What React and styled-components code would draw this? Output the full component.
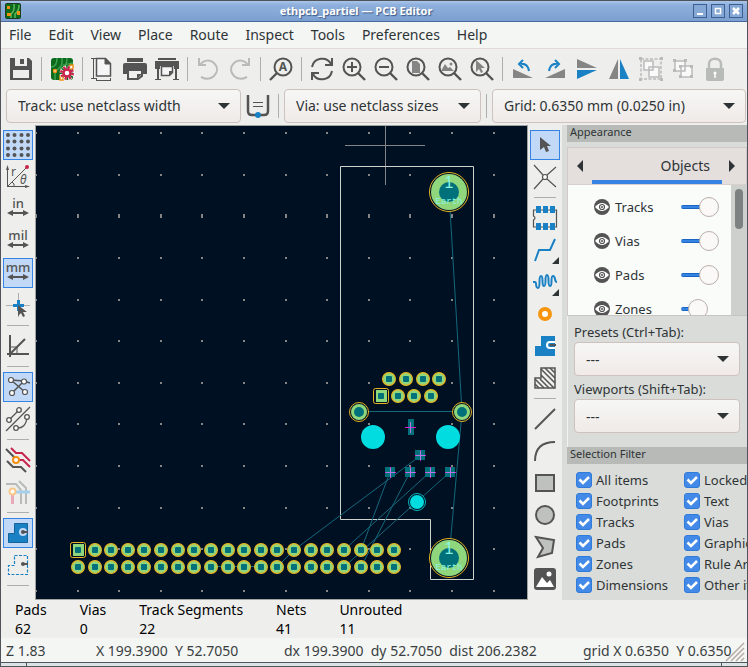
import React, { useState } from "react";
import styled, { createGlobalStyle } from "styled-components";

const GlobalStyle = createGlobalStyle`
  * {
    box-sizing: border-box;
  }
  body {
    margin: 0;
    font-family: "Noto Sans", "Open Sans", sans-serif;
    font-size: 14px;
    color: #2e3436;
  }
  button, select, input {
    font: inherit;
    color: inherit;
    margin: 0;
  }
`;

const Window = styled.div`
  display: flex;
  flex-direction: column;
  height: 100vh;
  overflow: hidden;
  background: #eeefed;
  border: 1px solid #50535a;
  border-bottom: none;
`;

const TitleBar = styled.header`
  display: grid;
  grid-template-columns: 20px 1fr 56px;
  align-items: center;
  flex: none;
  height: 21px;
  padding: 0 4px;
  background: linear-gradient(#a9c6ea, #8fb0dc 20%, #7a9fd0);
  border-bottom: 1px solid #4a6a9c;
`;

const Title = styled.h1`
  margin: 0;
  text-align: center;
  font-size: 11px;
  line-height: 20px;
  font-weight: 700;
  color: #ffffff;
  text-shadow: 1px 1px 1px #3c5a88;
`;

const WindowButtons = styled.div`
  display: flex;
  justify-content: flex-end;
  gap: 4px;
`;

const WindowButton = styled.button`
  display: flex;
  width: 14px;
  height: 14px;
  padding: 0;
  border: 1px solid #3c5f93;
  background: #86a8d6;
`;

const MenuBar = styled.nav`
  display: flex;
  flex: none;
  gap: 1px;
  height: 27px;
  background: #f4f6f4;
  border-bottom: 1px solid #e2dad8;
`;

const MenuItem = styled.button`
  padding: 0 8px;
  border: none;
  background: none;
  line-height: 26px;
`;

const Toolbar = styled.div`
  display: flex;
  align-items: center;
  flex: none;
  gap: 2px;
  height: 39px;
  padding: 0 5px;
`;

const OptionsBar = styled.div`
  display: flex;
  align-items: center;
  flex: none;
  height: 37px;
  padding: 0 1px 2px 5px;
  gap: 2px;
`;

const ToolButton = styled.button`
  position: relative;
  display: flex;
  align-items: center;
  justify-content: center;
  flex: none;
  width: 30px;
  height: 30px;
  padding: 0;
  border: 1px solid ${(p) => (p.$active ? "#3584e4" : "transparent")};
  background: ${(p) => (p.$active ? "#c1d9f7" : "transparent")};
`;

const Separator = styled.span`
  flex: none;
  width: ${(p) => (p.$across ? "22px" : "1px")};
  height: ${(p) => (p.$across ? "1px" : "24px")};
  margin: ${(p) => (p.$across ? "3px 0" : "0 3px")};
  background: #adafad;
`;

const Corner = styled.span`
  position: absolute;
  right: 0;
  bottom: 0;
  border-left: 7px solid transparent;
  border-bottom: 7px solid #2e3436;
`;

const SelectBox = styled.span`
  position: relative;
  display: flex;
  flex: ${(p) => p.$grow || "none"};
  min-width: 0;
`;

const SelectField = styled.select`
  appearance: none;
  width: 100%;
  height: 34px;
  padding: 0 32px 0 11px;
  border: 1px solid #cdc2bd;
  border-radius: 4px;
  background: linear-gradient(#f6f7f5, #f0eae8);
`;

const SelectArrow = styled.span`
  position: absolute;
  right: 11px;
  top: 14px;
  border: 6px solid transparent;
  border-top-color: #2e3436;
  border-bottom: none;
  pointer-events: none;
`;

const Workspace = styled.main`
  display: flex;
  flex: 1;
  min-height: 0;
`;

const SideBar = styled.div`
  display: flex;
  flex-direction: column;
  align-items: center;
  flex: none;
  gap: 2px;
  width: 34px;
  padding-top: 5px;
  overflow: hidden;
`;

const Board = styled.div`
  flex: 1;
  min-width: 0;
  overflow: hidden;
  border: 1px solid #a2a4a1;
  background: #001023;

  svg {
    display: block;
    width: 100%;
    height: 100%;
  }
`;

const Panels = styled.aside`
  display: flex;
  flex-direction: column;
  flex: none;
  width: 185px;
  padding-left: 5px;
  overflow: hidden;
  background: #dadcda;
`;

const PanelTitle = styled.h2`
  flex: none;
  margin: 0;
  padding-left: 3px;
  height: 17px;
  font-size: 11px;
  line-height: 14px;
  font-weight: 400;
  background: #b8bab7;
`;

const TabHeader = styled.div`
  display: flex;
  align-items: stretch;
  flex: none;
  height: 38px;
  margin-top: 5px;
  padding: 0 2px;
  background: #e4dedc;
  border: 1px solid #d0cbc8;
  border-bottom-color: #d8d0cc;
`;

const TabArrow = styled.button`
  width: 22px;
  padding: 0 0 0 7px;
  border: none;
  background: none;
`;

const ArrowShape = styled.span`
  display: block;
  width: 6px;
  height: 12px;
  background: #2e3436;
  clip-path: ${(p) =>
    p.$left ? "polygon(100% 0, 100% 100%, 0 50%)" : "polygon(0 0, 100% 50%, 0 100%)"};
`;

const Tab = styled.button`
  flex: 1;
  padding: 2px 12px 0 0;
  text-align: right;
  border: none;
  border-bottom: 4px solid #3584e4;
  background: none;
`;

const ObjectArea = styled.div`
  display: flex;
  flex: none;
  height: 131px;
  border-left: 1px solid #d0cbc8;
  border-bottom: 1px solid #c8c4c1;
  overflow: hidden;
`;

const ObjectList = styled.ul`
  flex: 1;
  height: 130px;
  margin: 0;
  padding: 5px 12px 0 26px;
  overflow: hidden;
  list-style: none;
  background: #fafcfa;
`;

const ObjectRow = styled.li`
  display: flex;
  align-items: center;
  height: 34px;
  font-size: 13px;
`;

const EyeButton = styled.button`
  display: flex;
  padding: 0;
  border: none;
  background: none;
`;

const ObjectLabel = styled.label`
  flex: 1;
  padding-left: 5px;
`;

const Opacity = styled.input`
  appearance: none;
  width: 38px;
  height: 20px;
  background: transparent;

  &::-webkit-slider-runnable-track {
    height: 4px;
    border-radius: 2px;
    background: linear-gradient(#1b64c2 1px, #3584e4 1px, #3584e4 3px, #1b64c2 3px) no-repeat;
    background-size: ${(p) => p.$fill}px 4px;
  }
  &::-webkit-slider-thumb {
    appearance: none;
    width: 20px;
    height: 20px;
    margin-top: -8px;
    border: 1px solid #b9aea9;
    border-radius: 50%;
    background: #faf9f8;
  }
`;

const ScrollTrack = styled.div`
  width: 16px;
  padding: 4px 4px 0;
  background: #ced0cd;
`;

const ScrollThumb = styled.div`
  height: 40px;
  border-radius: 4px;
  background: #7e8182;
`;

const PresetForm = styled.div`
  display: flex;
  flex-direction: column;
  flex: none;
  height: 131px;
  padding: 7px 7px 0 6px;
  border-left: 1px solid #f2f2f1;
`;

const PresetLabel = styled.label`
  font-size: 13px;
  line-height: 18px;
  margin-bottom: 1px;

  span + & {
    margin-top: 4px;
  }
`;

const FilterGrid = styled.div`
  display: grid;
  grid-template-columns: 108px 108px;
  grid-auto-rows: 21px;
  flex: none;
  padding: 5px 0 0 9px;
`;

const FilterItem = styled.label`
  display: flex;
  align-items: center;
  gap: 4px;
  font-size: 13px;
  white-space: nowrap;
`;

const CheckBox = styled.span`
  display: grid;
  width: 16px;
  height: 16px;

  > * {
    grid-area: 1 / 1;
  }
  svg {
    pointer-events: none;
  }
`;

const CheckInput = styled.input`
  appearance: none;
  width: 16px;
  height: 16px;
  border: 1px solid #2f7bd9;
  border-radius: 3px;
  background: #fff;

  &:checked {
    background: #438ae8;
  }
`;

const InfoBar = styled.dl`
  display: flex;
  flex: none;
  gap: 33px;
  height: 38px;
  margin: 0;
  padding: 0 14px;
  color: #000;
  line-height: 19px;

  dt, dd {
    margin: 0;
  }
`;

const StatusBar = styled.footer`
  display: grid;
  grid-template-columns: 90px 188px 1fr 164px;
  flex: none;
  height: 24px;
  padding-left: 5px;
  line-height: 25px;
  white-space: pre;
  color: #3a3f42;
  background: #f4f6f4;
`;

const GridStatus = styled.span`
  display: grid;

  > * {
    grid-area: 1 / 1;
  }
  svg {
    place-self: end;
    margin: 0 3px 2px 0;
  }
`;

const FrameEdge = styled.div`
  display: flex;
  justify-content: space-between;
  flex: none;
  height: 5px;
  padding: 0 25px;
  border-top: 1px solid #50585a;
  border-bottom: 1px solid #50585a;
  background: #dce3e6;

  span {
    width: 1px;
    background: #50585a;
  }
`;

const IconSvg = styled.svg`
  overflow: visible;
`;

const INK = "#545454";
const BLUE = "#1a81c4";
const PALE = "#b9bbb9";

const Icon = ({ children, size = 24, ...rest }) => (
  <IconSvg
    width={size}
    height={size}
    viewBox={`0 0 ${size} ${size}`}
    fill="none"
    stroke={INK}
    strokeWidth="2"
    aria-hidden="true"
    {...rest}
  >
    {children}
  </IconSvg>
);

const Lens = ({ children }) => (
  <Icon>
    <circle cx="10" cy="10" r="8.5" />
    <path d="M16 16l7 7" strokeWidth="2.4" />
    {children}
  </Icon>
);

const UnitIcon = ({ text }) => (
  <Icon>
    <text x="12" y="11" textAnchor="middle" fontSize="13" fontWeight="500" fill={INK} stroke="none">
      {text}
    </text>
    <path d="M5 16h14" />
    <path d="M1 16l6-3v6zM23 16l-6-3v6z" fill={INK} stroke="none" />
  </Icon>
);

const icons = {
  save: (
    <Icon stroke="none">
      <path d="M1 1h19l3 3v19H1z" fill={INK} />
      <path d="M6 1h12v8H6zM4 13h16v8H4z" fill="#eeefed" />
      <path d="M11 2h4v5h-4z" fill={INK} />
    </Icon>
  ),
  setup: (
    <Icon strokeWidth="1.5">
      <rect x="1" y="1" width="22" height="22" rx="3" fill="#0b6a1c" stroke="none" />
      <path d="M1 10c5 0 6-4 6-9M5 23v-6c0-6 7-5 7-11V1M10 12c5-2 7-4 7-11M13 8c5 0 6-2 10-2" stroke="#3fa24c" />
      <circle cx="5" cy="14" r="1.5" fill="#fff" stroke="#f29111" />
      <path d="M20 8h3v4h-3zM10 19h3v4h-3z" fill="#fff" stroke="#f29111" />
      <circle cx="17" cy="16" r="5.5" stroke="#fff" strokeWidth="4" strokeDasharray="2.9 1.42" />
      <circle cx="17" cy="16" r="5.5" stroke="#c8244c" strokeWidth="3" strokeDasharray="2.2 2.12" />
      <circle cx="17" cy="16" r="3.5" fill="#fff" stroke="#c8244c" strokeWidth="2.5" />
    </Icon>
  ),
  page: (
    <Icon strokeWidth="1">
      <path d="M2.5 1.5v20M0 1.5h5M0 21.5h5M5.5 23.5h14M5.5 21v3M19.5 21v3" />
      <path d="M5.5 1.5h9l5 5v12.5h-14z" strokeWidth="1.5" fill="#f4f5f4" />
      <path d="M14 1v6h6z" fill={INK} />
    </Icon>
  ),
  print: (
    <Icon stroke="none">
      <path d="M4 1h16v4H4zM2 6h20q2 0 2 2v9h-4v-5H4v5H0V8q0-2 2-2z" fill={INK} />
      <path d="M5 13h14v6l-4 3H5z" fill="#eeefed" stroke={INK} />
      <path d="M19 17h-5v5z" fill={INK} />
    </Icon>
  ),
  plot: (
    <Icon stroke="none">
      <path d="M3 1h18v2H3zM0 4h24v8h-5V9H5v3H0zM2 12h2v10h2v1H0v-1h2zM20 12h2v10h2v1h-6v-1h2z" fill={INK} />
      <path d="M6.5 9.5h11v6l-3 3h-8z" fill="#f4f5f4" stroke={INK} strokeWidth="1.5" />
      <path d="M18 14h-4v5z" fill={INK} />
    </Icon>
  ),
  undo: (
    <Icon stroke={PALE}>
      <path d="M3 1v7h7M4 8c3-5 10-6 14-2 4 4 4 9 0 13-4 4-9 3-13 1" />
    </Icon>
  ),
  redo: (
    <Icon stroke={PALE}>
      <path d="M21 1v7h-7M20 8c-3-5-10-6-14-2-4 4-4 9 0 13 4 4 9 3 13 1" />
    </Icon>
  ),
  find: (
    <Icon>
      <circle cx="14" cy="10" r="8.5" />
      <path d="M8 16l-7 7" strokeWidth="2.4" />
      <text x="14" y="14" textAnchor="middle" fontSize="12" fontWeight="700" fill={INK} stroke="none">A</text>
    </Icon>
  ),
  refresh: (
    <Icon>
      <path d="M2 10C4 0 17-1 21 7M22 14c-2 10-15 11-19 3" />
      <path d="M22 1v7h-7M2 23v-7h7" />
    </Icon>
  ),
  zoomIn: <Lens><path d="M5 10h10M10 5v10" /></Lens>,
  zoomOut: <Lens><path d="M5 10h10" /></Lens>,
  zoomPage: <Lens><path d="M6 4h5l3 3v9H6z" fill="#858585" stroke="none" /></Lens>,
  zoomObjects: (
    <Lens>
      <path d="M3 14l4-7 3 4 2-1 4 4z" fill="#858585" stroke="none" />
      <circle cx="13" cy="7" r="1.5" fill="#858585" stroke="none" />
    </Lens>
  ),
  zoomSelection: <Lens><path d="M6 3v12l3-3 2 4 2-1-2-4h4z" fill="#858585" stroke="none" /></Lens>,
  rotateLeft: (
    <Icon>
      <path d="M2 12l20 9H2z" fill="#858585" stroke="none" />
      <path d="M12 3L8 7l4 4M8 7c6-1 9 1 10 7" stroke={BLUE} />
    </Icon>
  ),
  rotateRight: (
    <Icon>
      <path d="M22 12L2 21h20z" fill="#858585" stroke="none" />
      <path d="M12 3l4 4-4 4M16 7c-6-1-9 1-10 7" stroke={BLUE} />
    </Icon>
  ),
  flipV: (
    <Icon stroke="none">
      <path d="M2 2l20 9H2z" fill="#858585" />
      <path d="M2 13h20L2 22z" fill={BLUE} />
    </Icon>
  ),
  flipH: (
    <Icon stroke="none">
      <path d="M11 2v20H2z" fill="#858585" />
      <path d="M13 2v20h9z" fill={BLUE} />
    </Icon>
  ),
  group: (
    <Icon stroke={PALE} strokeWidth="1.5">
      <path d="M2 2h20v20H2z" strokeDasharray="3 1.5" />
      <path d="M5 4h9v9H5zM10 10h10v10H10z" fill="#f8f9f8" />
      <path d="M0 0h3v3H0zM21 0h3v3h-3zM0 21h3v3H0zM21 21h3v3h-3z" fill={PALE} stroke="none" />
    </Icon>
  ),
  ungroup: (
    <Icon stroke={PALE} strokeWidth="1.5">
      <path d="M4 4h10v10H4zM10 9h11v11H10z" fill="#f8f9f8" />
      <path d="M2 2h3v3H2zM13 2h3v3h-3zM2 12h3v3H2zM8 8h3v3H8zM19 8h3v3h-3zM8 18h3v3H8zM19 18h3v3h-3z" fill={PALE} stroke="none" />
    </Icon>
  ),
  lock: (
    <Icon stroke={PALE} strokeWidth="2.5">
      <path d="M6 12V7c0-7 12-7 12 0v5" />
      <path d="M3 11h18v11q0 2-2 2H5q-2 0-2-2z" fill={PALE} stroke="none" />
      <circle cx="12" cy="16" r="1.5" fill="#fff" stroke="none" />
      <path d="M12 16v5" stroke="#fff" strokeWidth="1.5" />
    </Icon>
  ),
  trackWidth: (
    <Icon>
      <path d="M2 1v16q0 4 4 4h12q4 0 4-4V1" strokeWidth="2.5" />
      <path d="M7 8.5h10M7 12.5h10" strokeWidth="1" />
      <circle cx="12" cy="21" r="3" fill={BLUE} stroke="none" />
    </Icon>
  ),
  grid: (
    <Icon stroke="none" fill={INK}>
      {[2, 8.5, 15.5, 22].map((y) =>
        [2, 8.5, 15.5, 22].map((x) => <circle key={`${x}-${y}`} cx={x} cy={y} r="2" />)
      )}
    </Icon>
  ),
  polar: (
    <Icon strokeWidth="1">
      <path d="M1.5 22V4M1 21.5h19M1.5 21.5L20 3M6 17q3 2 2 4" />
      <path d="M1.5 0L0 5h3zM24 21.5l-5-1.5v3z" fill={INK} stroke="none" />
      <circle cx="21" cy="2" r="2" fill="#c8244c" stroke="none" />
      <text x="5" y="11" fontSize="12" fill={INK} stroke="none">r</text>
      <text x="14" y="19" fontSize="12" fontStyle="italic" fill={INK} stroke="none">θ</text>
    </Icon>
  ),
  inch: <UnitIcon text="in" />,
  mil: <UnitIcon text="mil" />,
  mm: <UnitIcon text="mm" />,
  cursor: (
    <Icon>
      <path d="M12.5 0v24M0 12.5h24" stroke="#adafad" strokeWidth="1" />
      <path d="M12.5 7v11M7 12.5h11" stroke={BLUE} strokeWidth="3" />
      <path d="M12 12v11l3-3 2 4 2-1-2-4h4z" fill={INK} stroke="none" />
    </Icon>
  ),
  angle: (
    <Icon>
      <path d="M4 1v22M1 20h22M4 20L19 5" />
      <path d="M4 13h7v7" strokeWidth="1" />
    </Icon>
  ),
  ratsnest: (
    <Icon strokeWidth="1.5">
      <path d="M5 5l13 1 6 2M5 5l14 12M18 6L6 18" />
      <g fill="#fff" strokeWidth="1.2">
        <circle cx="5" cy="5" r="2.5" />
        <circle cx="18" cy="6.5" r="2.5" />
        <circle cx="6" cy="18" r="2.5" />
        <circle cx="19" cy="17" r="2.5" />
      </g>
    </Icon>
  ),
  curvedRatsnest: (
    <Icon strokeWidth="1.3">
      <path d="M0 24L24 0M3 13L13 3M10 21q10 1 11-11" />
      <g fill="#fff">
        <circle cx="3" cy="13" r="2.3" />
        <circle cx="13" cy="3" r="2.3" />
        <circle cx="10" cy="21" r="2.3" />
        <circle cx="21" cy="10" r="2.3" />
      </g>
    </Icon>
  ),
  highlight: (
    <Icon>
      <path d="M0 1l9 9M1 13l6 6h8l5 5" />
      <path d="M5 0l5 5h6l8 8M12 12h5l7 7" stroke="#c8244c" />
      <circle cx="10" cy="12" r="3" fill="#fff" stroke="#f29111" />
    </Icon>
  ),
  netColors: (
    <Icon stroke={PALE}>
      <path d="M0 4h10l5 6v14M13 1l7 7v16" />
      <path d="M9 12h15" stroke="#a5cfea" strokeWidth="3" />
      <path d="M6.5 14v10" stroke="#e8a9b8" strokeWidth="3" />
      <circle cx="6.5" cy="11.5" r="3" fill="#fff" stroke="#f8c98a" />
    </Icon>
  ),
  zoneFill: (
    <Icon>
      <path d="M8.5 2.5h13v19h-19v-9h6z" fill={BLUE} stroke="#146499" strokeWidth="1" />
      <circle cx="17" cy="11" r="4" fill="#c1d9f7" stroke="none" />
      <path d="M16 11h6" />
      <circle cx="17" cy="11" r="2" fill={INK} stroke="none" />
    </Icon>
  ),
  zoneOutline: (
    <Icon>
      <path d="M8.5 2.5h13v19h-19v-9h6z" stroke={BLUE} strokeWidth="1.2" strokeDasharray="3 1.5" />
      <path d="M16 11h6" />
      <circle cx="17" cy="11" r="2" fill={INK} stroke="none" />
    </Icon>
  ),
  select: (
    <Icon>
      <path d="M7 4v13l4-3 2 5 3-1-2-5h4z" fill={INK} stroke="none" />
    </Icon>
  ),
  localRats: (
    <Icon strokeWidth="1.2">
      <path d="M1 0l9 10M23 2l-9 8M1 24l9-10M23 22l-9-8" />
      <circle cx="12" cy="12" r="2.5" fill="#fff" />
    </Icon>
  ),
  footprint: (
    <Icon strokeWidth="1.2">
      <path d="M2 4H.5v6q3 2 0 4v7h23V4H2" />
      <path d="M3 0h5v7H3zM10 0h5v7h-5zM17 0h5v7h-5zM3 17h5v7H3zM10 17h5v7h-5zM17 17h5v7h-5z" fill={BLUE} stroke="none" />
    </Icon>
  ),
  route: (
    <Icon stroke={BLUE}>
      <path d="M2 23l4-11h11l5-11" />
    </Icon>
  ),
  tune: (
    <Icon stroke={BLUE}>
      <path d="M0 12h2c2 0 0 6 3 6s0-12 3-12 0 10 3 10 0-11 3-11 0 11 3 11 0-10 3-10 1 6 4 6" />
    </Icon>
  ),
  via: (
    <Icon>
      <circle cx="12" cy="12" r="5" stroke="#f79410" strokeWidth="4" fill="#fff" />
    </Icon>
  ),
  zone: (
    <Icon>
      <path d="M8 2h14v20H2V12h6z" fill={BLUE} stroke="none" />
      <path d="M22 8h-5a3 3 0 000 6h5" stroke="#fff" />
      <path d="M17 11h6" />
    </Icon>
  ),
  keepout: (
    <Icon strokeWidth="1.5">
      <path d="M8 2h14v20H2V12h6z" />
      <path d="M8 3l14 14M8 9l13 13M12 2l10 10M17 2l5 5M2 13l9 9M7 13l9 9M2 18l4 4" />
    </Icon>
  ),
  line: <Icon><path d="M2 22L22 2" /></Icon>,
  arc: <Icon><path d="M2 22Q2 3 22 3" /></Icon>,
  rect: <Icon><path d="M3 4h18v16H3z" fill="#bfc1bf" /></Icon>,
  circle: <Icon><circle cx="12" cy="12" r="9" fill="#bfc1bf" /></Icon>,
  polygon: <Icon><path d="M3 2l18 3-2 13-14 4 5-9z" fill="#bfc1bf" /></Icon>,
  image: (
    <Icon stroke="none">
      <rect x="1" y="1" width="22" height="22" rx="3" fill={INK} />
      <path d="M3 20l6-10 5 6 3-3 4 7z" fill="#fff" />
      <circle cx="16" cy="7" r="2.5" fill="#fff" />
    </Icon>
  ),
};

const topTools = [
  "save", "|", "setup", "|", "page", "print", "plot", "|", "undo", "redo", "|", "find", "|",
  "refresh", "zoomIn", "zoomOut", "zoomPage", "zoomObjects", "zoomSelection", "|",
  "rotateLeft", "rotateRight", "flipV", "flipH", "group", "ungroup", "lock",
];
const leftTools = [
  "grid", "polar", "inch", "mil", "mm", "cursor", "|", "angle", "|", "ratsnest",
  "curvedRatsnest", "|", "highlight", "netColors", "|", "zoneFill", "zoneOutline", "|",
];
const rightTools = [
  "select", "localRats", "|", "footprint", "route", "tune", "via", "zone", "keepout", "|",
  "line", "arc", "rect", "circle", "polygon", "image",
];
const withPalette = ["route", "tune"];

const Tools = ({ names, active = [], across }) =>
  names.map((name, i) =>
    name === "|" ? (
      <Separator key={i} $across={across} />
    ) : (
      <ToolButton key={i} type="button" aria-label={name} $active={active.includes(name)}>
        {icons[name]}
        {withPalette.includes(name) && <Corner />}
      </ToolButton>
    )
  );

const Dropdown = ({ id, label, value, grow }) => (
  <SelectBox $grow={grow}>
    <SelectField id={id} aria-label={label} defaultValue={value}>
      <option>{value}</option>
    </SelectField>
    <SelectArrow />
  </SelectBox>
);

const range = (n) => Array.from({ length: n }, (_, i) => i);

const Pad = ({ x, y, square }) => (
  <g>
    {square ? (
      <>
        <rect x={x - 7.5} y={y - 7.5} width="15" height="15" rx="2" fill="none" stroke="#e6b422" />
        <rect x={x - 5} y={y - 6} width="11" height="12" fill="#8fd67c" />
      </>
    ) : (
      <circle cx={x} cy={y} r="6.4" fill="#8fd67c" stroke="#e6b422" strokeWidth="1.2" />
    )}
    <rect x={x - 3} y={y - 3} width="6" height="6" rx="1" fill="#00707a" />
  </g>
);

const RingPad = ({ x, y, r, hole }) => (
  <g>
    <circle cx={x} cy={y} r={r} fill="#001023" stroke="#e6b422" />
    <circle cx={x} cy={y} r={r - 1.5} fill="#8fd67c" />
    <circle cx={x} cy={y} r={hole} fill="#00707a" />
  </g>
);

const EarthPad = ({ x, y }) => (
  <g>
    <RingPad x={x} y={y} r={19.5} hole={10} />
    <g fill="#8af5e0" textAnchor="middle">
      <text x={x} y={y - 4} fontFamily="Liberation Sans, sans-serif" fontSize="16">1</text>
      <text x={x} y={y + 12} fontFamily="Liberation Mono, monospace" fontSize="9">Earth</text>
    </g>
  </g>
);

const SmdPad = ({ x, y, w = 10, h = 10 }) => (
  <g shapeRendering="crispEdges" strokeWidth="1">
    <rect x={x - w / 2} y={y - h / 2} width={w} height={h} fill="#00707a" />
    <path d={`M${x - 5} ${y + 0.5}h11M${x + 0.5} ${y - 5}v11`} stroke="#e01cd0" />
    <path d={`M${x - 4} ${y + 0.5}h9M${x + 0.5} ${y - 4}v9`} stroke="#b478e6" />
  </g>
);

const ratLines = [
  "M449 192L462 412L449 558",
  "M359 411.5H462",
  "M420 456L294 550L277 567",
  "M390 472L361 550",
  "M410 472L361 567",
  "M430 472L344 550",
  "M450 472L344 567",
  "M211 566.5H261",
];

const BoardDrawing = () => (
  <svg role="img" aria-label="Board layout">
    {/* board coordinates start at the window corner */}
    <g transform="translate(-36 -126)">
      {range(12).map((row) =>
        range(12).map((col) => (
          <rect
            key={`${row}-${col}`}
            x={Math.round(35 + col * 41.6)}
            y={Math.round(132 + row * 41.64) - (row === 2 ? 1 : 0)}
            width="2"
            height={row === 2 ? 4 : 2}
            fill="#858585"
          />
        ))
      )}
      <path d="M345 145.5h80M385.5 126v59" stroke="#858585" />
      <path d="M340.5 166.5h133v413h-43v-60h-90z" fill="none" stroke="#d0d2cd" />
      <path d={ratLines.join("")} fill="none" stroke="#13687a" />
      {range(20).map((i) => (
        <React.Fragment key={i}>
          <Pad x={Math.round(78 + i * 16.62)} y={550} square={i === 0} />
          <Pad x={Math.round(78 + i * 16.62)} y={567} />
        </React.Fragment>
      ))}
      {[389, 406, 423, 439].map((x) => <Pad key={x} x={x} y={379} />)}
      {[381, 398, 414, 431].map((x, i) => <Pad key={x} x={x} y={396} square={i === 0} />)}
      <RingPad x={359} y={412} r={9.5} hole={5} />
      <RingPad x={462} y={412} r={9.5} hole={5} />
      <circle cx="373" cy="437" r="12" fill="#00dce0" />
      <circle cx="448" cy="437" r="12" fill="#00dce0" />
      <circle cx="417" cy="502" r="8.5" fill="#001023" stroke="#00b8c0" />
      <circle cx="417" cy="502" r="7" fill="#00dce0" />
      <rect x="408" y="419" width="6" height="16" fill="#00707a" />
      <path d="M405 427.5h11" stroke="#e01cd0" />
      <path d="M410.5 422v11" stroke="#b478e6" />
      <SmdPad x={420} y={455} />
      {[390, 410, 430, 450].map((x) => <SmdPad key={x} x={x} y={472} />)}
      <EarthPad x={449} y={192} />
      <EarthPad x={449} y={558} />
    </g>
  </svg>
);

const Eye = () => (
  <Icon size={16} stroke="none">
    <circle cx="8" cy="8" r="8" fill={INK} />
    <path d="M1 8q7-8 14 0q-7 8-14 0z" fill="#fff" />
    <circle cx="8" cy="8" r="2.5" stroke={INK} strokeWidth="1.2" />
    <circle cx="8" cy="8" r="1" fill={INK} />
  </Icon>
);

const objects = [
  { name: "Tracks", opacity: 100 },
  { name: "Vias", opacity: 100 },
  { name: "Pads", opacity: 100 },
  { name: "Zones", opacity: 40 },
];

const ObjectItem = ({ name, opacity }) => {
  const [value, setValue] = useState(opacity);

  return (
    <ObjectRow>
      <EyeButton type="button" aria-label={`Show ${name}`}>
        <Eye />
      </EyeButton>
      <ObjectLabel htmlFor={`opacity-${name}`}>{name}</ObjectLabel>
      <Opacity
        id={`opacity-${name}`}
        type="range"
        value={value}
        $fill={10 + Math.round(value * 0.18)}
        onChange={(e) => setValue(Number(e.target.value))}
      />
    </ObjectRow>
  );
};

const filters = [
  "All items", "Locked items", "Footprints", "Text", "Tracks", "Vias",
  "Pads", "Graphics", "Zones", "Rule Areas", "Dimensions", "Other items",
];

const stats = [
  ["Pads", "62"],
  ["Vias", "0"],
  ["Track Segments", "22"],
  ["Nets", "41"],
  ["Unrouted", "11"],
];

const menus = ["File", "Edit", "View", "Place", "Route", "Inspect", "Tools", "Preferences", "Help"];

const App = () => (
  <>
    <GlobalStyle />
    <Window>
      <TitleBar>
        <Icon size={16} stroke="none">
          <rect width="16" height="16" rx="2" fill="#1d3b20" />
          <path d="M1 1h14v14H1z" fill="#0b6a1c" />
          <path d="M6 15v-4q4-3 3-10M10 15v-4q4-3 4-9" stroke="#5cb85c" strokeWidth="1.5" />
          <path d="M2 3h3v3H2zM2 10h4v3H2zM12 8h3v4h-3z" fill="#f29111" />
        </Icon>
        <Title>ethpcb_partiel — PCB Editor</Title>
        <WindowButtons>
          <WindowButton type="button" aria-label="Minimize">
            <Icon size={12} stroke="#fff"><path d="M3 9h6" /></Icon>
          </WindowButton>
          <WindowButton type="button" aria-label="Maximize">
            <Icon size={12} stroke="#fff"><path d="M3 3.5h6M3.5 3v6M8.5 3v6M3 8.5h6" strokeWidth="1.5" /></Icon>
          </WindowButton>
          <WindowButton type="button" aria-label="Close">
            <Icon size={12} stroke="#fff"><path d="M3 3l6 6M9 3l-6 6" strokeWidth="2.5" /></Icon>
          </WindowButton>
        </WindowButtons>
      </TitleBar>

      <MenuBar>
        {menus.map((menu) => (
          <MenuItem key={menu} type="button">{menu}</MenuItem>
        ))}
      </MenuBar>

      <Toolbar>
        <Tools names={topTools} />
      </Toolbar>
      <OptionsBar>
        <Dropdown label="Track width" value="Track: use netclass width" grow="235 1 0" />
        <Tools names={["trackWidth", "|"]} />
        <Dropdown label="Via size" value="Via: use netclass sizes" grow="197 1 0" />
        <Tools names={["|"]} />
        <Dropdown label="Grid" value="Grid: 0.6350 mm (0.0250 in)" grow="254 1 0" />
      </OptionsBar>

      <Workspace>
        <SideBar>
          <Tools names={leftTools} active={["grid", "mm", "ratsnest", "zoneFill"]} across />
        </SideBar>
        <Board>
          <BoardDrawing />
        </Board>
        <SideBar>
          <Tools names={rightTools} active={["select"]} across />
        </SideBar>
        <Panels>
          <PanelTitle>Appearance</PanelTitle>
          <TabHeader>
            <TabArrow type="button" aria-label="Previous tab"><ArrowShape $left /></TabArrow>
            <Tab type="button">Objects</Tab>
            <TabArrow type="button" aria-label="Next tab"><ArrowShape /></TabArrow>
          </TabHeader>
          <ObjectArea>
            <ObjectList>
              {objects.map((item) => (
                <ObjectItem key={item.name} {...item} />
              ))}
            </ObjectList>
            <ScrollTrack>
              <ScrollThumb />
            </ScrollTrack>
          </ObjectArea>
          <PresetForm>
            <PresetLabel htmlFor="presets">Presets (Ctrl+Tab):</PresetLabel>
            <Dropdown id="presets" value="---" />
            <PresetLabel htmlFor="viewports">Viewports (Shift+Tab):</PresetLabel>
            <Dropdown id="viewports" value="---" />
          </PresetForm>
          <PanelTitle>Selection Filter</PanelTitle>
          <FilterGrid>
            {filters.map((name) => (
              <FilterItem key={name}>
                <CheckBox>
                  <CheckInput type="checkbox" defaultChecked />
                  <Icon size={16} stroke="#fff">
                    <path d="M3.5 7.5l3.5 3.5 6-6" strokeWidth="2.5" />
                  </Icon>
                </CheckBox>
                {name}
              </FilterItem>
            ))}
          </FilterGrid>
        </Panels>
      </Workspace>

      <InfoBar>
        {stats.map(([label, value]) => (
          <div key={label}>
            <dt>{label}</dt>
            <dd>{value}</dd>
          </div>
        ))}
      </InfoBar>
      <StatusBar>
        <span>Z 1.83</span>
        <span>X 199.3900  Y 52.7050</span>
        <span>dx 199.3900  dy 52.7050  dist 206.2382</span>
        <GridStatus>
          <span>grid X 0.6350  Y 0.6350</span>
          <Icon size={18} stroke="#b5aaa5" strokeWidth="1.5">
            <path d="M0 18L18 0M5 18L18 5M10 18l8-8M15 18l3-3" />
          </Icon>
        </GridStatus>
      </StatusBar>
      <FrameEdge>
        <span />
        <span />
      </FrameEdge>
    </Window>
  </>
);

export default App;
